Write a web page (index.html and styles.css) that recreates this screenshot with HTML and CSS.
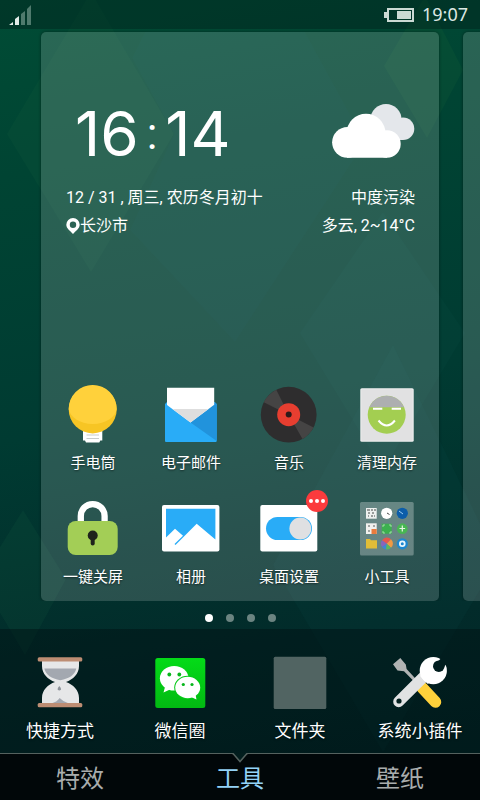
FILE: index.html
```html
<!DOCTYPE html>
<html lang="zh-CN">
<head>
<meta charset="utf-8">
<meta name="viewport" content="width=device-width, initial-scale=1">
<title>桌面</title>
<link rel="stylesheet" href="styles.css">
</head>
<body>
<svg class="wallpaper" viewBox="0 0 480 800" preserveAspectRatio="none" aria-hidden="true">
  <path d="M91-8L174 134 91 272 7 134z" fill="#3c9a52" opacity=".06"/>
  <path d="M145 32h160l60 110-130 200L130 230l44-96-42-76z" fill="#2a7fa0" opacity=".03"/>
  <path d="M425-4L463 70 427 138 384 66z" fill="#3c9a42" opacity=".08"/>
  <path d="M383 212L465 333 383 470 300 333z" fill="#4aa0a0" opacity=".03"/>
  <path d="M393 345L498 560 383 752 273 565z" fill="#2c8d8d" opacity=".04"/>
  <path d="M23 510L66 579 25 655-20 579z" fill="#3c9a62" opacity=".07"/>
</svg>

<header class="status">
  <svg class="signal" viewBox="0 0 24 22" aria-label="信号">
    <path d="M0 21l4-3v3z" fill="#e2ebe8"/><path d="M6 21v-6l4-3v9z" fill="#e2ebe8"/>
    <path d="M12 21V10l4-3v14zM18 21V5l4-4v20z" fill="#4f7a6d"/>
  </svg>
  <div class="status-right">
    <svg class="battery" viewBox="0 0 30 14" aria-label="电量">
      <path d="M4 1h25v12H4z" fill="none" stroke="#cbdad4" stroke-width="2"/>
      <path d="M0 4h3v6H0zM13 3h14v8H13z" fill="#cbdad4"/>
    </svg>
    <time>19:07</time>
  </div>
</header>

<main class="pages">
  <section class="page">
    <div class="widget">
      <div class="clock">16<span class="colon">:</span>14</div>
      <svg class="cloud" viewBox="0 0 84 56" aria-label="多云">
        <g fill="#e4e7eb"><circle cx="55" cy="16.5" r="15.5"/><circle cx="72" cy="25.7" r="11.3"/><path d="M46 20h26v17H46z"/></g>
        <g fill="#fff"><circle cx="16.5" cy="39.3" r="15.4"/><circle cx="35" cy="30.4" r="19.6"/><circle cx="56" cy="41" r="13.7"/><path d="M16 32h40v22.7H16z"/></g>
      </svg>
      <div>12 / 31 , 周三, 农历冬月初十</div>
      <div class="end">中度污染</div>
      <div class="city">
        <svg class="pin" viewBox="0 0 14 16" aria-hidden="true"><path d="M7 0a6.700 6.700 0 0 1 6.700 6.700C13.700 10.500 9.500 13 7 16 4.500 13 .3 10.500.3 6.700A6.700 6.700 0 0 1 7 0zm0 3.600a3.200 3.200 0 1 0 0 6.400 3.200 3.200 0 0 0 0-6.400z" fill="#fff" fill-rule="evenodd"/></svg>长沙市
      </div>
      <div class="end">多云, 2~14°C</div>
    </div>

    <div class="apps">
      <button class="app" type="button">
        <svg class="icon" viewBox="0 0 60 60" aria-hidden="true">
          <path d="M20 45h19.300v11.500h-2l-1 2H23l-1-2h-2z" fill="#fff"/>
          <path d="M23.500 51h12.500M23.500 54.500h12.500" stroke="#c9cccb"/>
          <circle cx="29.700" cy="25.400" r="24" fill="#f7c524"/>
          <path d="M5.700 25a24 24 0 0 1 48 0c-1 8-11 15-24 15S7 33 5.700 25z" fill="#ffd13b"/>
        </svg>
        <span>手电筒</span>
      </button>
      <button class="app" type="button">
        <svg class="icon" viewBox="0 0 60 60" aria-hidden="true">
          <path d="M4 20l2-2h47.500l2.200 2v37a1 1 0 0 1-1 1H5a1 1 0 0 1-1-1z" fill="#29acf7"/>
          <path d="M29.500 38.500L53.500 18l2.200 2v37z" fill="#2193dc"/>
          <path d="M6 3.700h47.200v17L29.500 38.500 6 21z" fill="#fff"/>
          <path d="M11.500 25h36l-18 13.500z" fill="#dedede"/>
        </svg>
        <span>电子邮件</span>
      </button>
      <button class="app" type="button">
        <svg class="icon" viewBox="0 0 60 60" aria-hidden="true">
          <circle cx="29.700" cy="30.700" r="27.900" fill="#2e2d2e"/>
          <path d="M29.700 30.700L4.800 18.200Q8.500 10.500 17.300 5.700zM29.700 30.700L54.600 43.500Q50.500 51 43.500 55z" fill="#454444"/>
          <circle cx="29.700" cy="30.700" r="11.500" fill="#e73e30"/><circle cx="29.700" cy="30.500" r="3" fill="#2e1a1a"/>
        </svg>
        <span>音乐</span>
      </button>
      <button class="app" type="button">
        <svg class="icon" viewBox="0 0 60 60" aria-hidden="true">
          <rect x="3.300" y="4.300" width="53.400" height="53.400" rx="1.500" fill="#f1f1f1"/>
          <rect x="4.300" y="5.300" width="51.400" height="51.400" rx="1" fill="#e1e1e2"/>
          <circle cx="29.700" cy="30.700" r="19" fill="#a3ce51"/>
          <path d="M12.200 23.300a19 19 0 0 1 35 0z" fill="#adafb0"/>
          <path d="M16 24.700h9.300M34.700 24.700H44" stroke="#fff" stroke-width="2"/>
          <path d="M21.500 36.500q8.200 10 16.400 0" fill="none" stroke="#fff" stroke-width="2"/>
        </svg>
        <span>清理内存</span>
      </button>
      <button class="app" type="button">
        <svg class="icon" viewBox="0 0 60 60" aria-hidden="true">
          <path d="M17.800 26v-8a11.900 11.900 0 0 1 23.800 0v8" fill="none" stroke="#fff" stroke-width="6.300"/>
          <rect x="4.700" y="23" width="50" height="34" rx="8" fill="#a3ce56"/>
          <circle cx="29.700" cy="37.500" r="5" fill="#1f231c"/><path d="M29.700 38v7.500" stroke="#1f231c" stroke-width="4" stroke-linecap="round"/>
        </svg>
        <span>一键关屏</span>
      </button>
      <button class="app" type="button">
        <svg class="icon" viewBox="0 0 60 60" aria-hidden="true">
          <rect x="1" y="7" width="57.400" height="46.400" rx="2" fill="#fff"/>
          <path d="M5 10.700h49.400v30.800L35.700 25.700 14.500 47l-1-1 8.500-8.300-8-7L5 39.500z" fill="#29acf7"/>
        </svg>
        <span>相册</span>
      </button>
      <button class="app" type="button">
        <svg class="icon" viewBox="0 0 60 60" aria-hidden="true">
          <rect x="1.300" y="7" width="57" height="46.400" rx="2" fill="#fff"/>
          <rect x="7" y="19" width="46" height="23" rx="11.500" fill="#29acf7"/>
          <circle cx="41.300" cy="30.500" r="10.900" fill="#dfe0e2"/>
        </svg>
        <span class="badge"><i></i><i></i><i></i></span>
        <span>桌面设置</span>
      </button>
      <button class="app" type="button">
        <svg class="icon" viewBox="0 0 60 60" aria-hidden="true">
          <rect x="3" y="4" width="53.700" height="53.400" rx="1.500" fill="#fff" fill-opacity=".29"/>
          <rect x="9" y="10" width="10.700" height="10.700" fill="#eef1ef"/>
          <path d="M10 12h3m1 0h2m1 0h2M11 15h2m2 0h2M11 18h1m2 0h2m1 0h1" stroke="#454b49" stroke-width="1.200"/>
          <circle cx="29.700" cy="15.300" r="5.600" fill="#fff"/><path d="M30 15l2.500 1.500" stroke="#444"/>
          <circle cx="45.300" cy="15.300" r="5.600" fill="#0c5da9"/><path d="M42 13l4 3" stroke="#9dd1f5"/>
          <rect x="9" y="25.300" width="10.700" height="10.700" fill="#f2f1ee"/><path d="M11 28h2m3 0h2M11 33h2" stroke="#565c5a" stroke-width="1.200"/><path d="M14.500 31h5.200v5h-5.200z" fill="#ea7b3d"/>
          <rect x="24.700" y="25.700" width="10" height="10" fill="#3cb04f"/><path d="M26 29v-2h2m4 0h2v2m0 4v2h-2m-4 0h-2v-2" fill="none" stroke="#c7efc9" stroke-width=".7"/>
          <circle cx="45.300" cy="30.700" r="5.400" fill="#48b653"/><path d="M45.300 27.500v6M42.500 30.500h5.600" stroke="#e6f7e3" stroke-width="1.200"/>
          <path d="M9 41h4l1 1.300h6V50.500H9z" fill="#e1bd38"/>
          <circle cx="29.700" cy="45.800" r="5.600" fill="#3f86d3"/><path d="M29.700 45.800L25 42.500a5.600 5.600 0 0 1 9-1.200z" fill="#e6574d"/><path d="M29.700 45.800l4.300-4.500a5.600 5.600 0 0 1 0 8.500z" fill="#f19a42"/><path d="M29.700 45.800L25 42.500a5.600 5.600 0 0 0 0 6.300z" fill="#8b64b8"/><path d="M29.700 45.800l4.300 4a5.600 5.600 0 0 1-5 1.500z" fill="#5cb85a"/>
          <circle cx="45.300" cy="45.800" r="5.600" fill="#1d87cf"/><circle cx="45.300" cy="45.800" r="2.400" fill="none" stroke="#e9f6fd" stroke-width="1.800"/>
        </svg>
        <span>小工具</span>
      </button>
    </div>
  </section>
  <section class="page" aria-hidden="true"></section>
</main>

<div class="pager" aria-hidden="true"><i class="current"></i><i></i><i></i><i></i></div>

<section class="dock">
  <button class="app" type="button">
    <svg class="icon" viewBox="0 0 60 60" aria-hidden="true">
      <path d="M12 8h37v5c0 8-6 13.500-13 16 7 2.500 13 8 13 16v6H12v-6c0-8 6-13.500 13-16-7-2.500-13-8-13-16z" fill="#e6e7e8"/>
      <path d="M14.300 15.500h32c-1.500 6.500-7 10-16 11.700-9-1.700-14.500-5.200-16-11.700z" fill="#a3a8b0"/>
      <path d="M21 50.500q6-1.500 8.700-5.500 3.500 4 9.300 5.500z" fill="#a3a8b0"/>
      <path d="M29.300 33q3.500 4 0 4.500-3.500-.5 0-4.500z" fill="#8d9299"/>
      <rect x="7.700" y="4.300" width="44.600" height="4.200" rx="1.500" fill="#bd8d73"/><rect x="7.700" y="50" width="44.600" height="4.200" rx="1.500" fill="#bd8d73"/>
    </svg>
    <span>快捷方式</span>
  </button>
  <button class="app" type="button">
    <svg class="icon" viewBox="0 0 60 60" aria-hidden="true">
      <defs><linearGradient id="green" x2="0" y2="1"><stop stop-color="#04db18"/><stop offset="1" stop-color="#02b912"/></linearGradient></defs>
      <rect x="5.300" y="5" width="50" height="50" rx="2.500" fill="url(#green)"/>
      <path d="M15 34l-1.500 5.500 6.500-3z" fill="#fff"/><ellipse cx="24.200" cy="25.200" rx="14.300" ry="12.300" fill="#fff"/>
      <circle cx="19.300" cy="21.500" r="1.900" fill="#07b61b"/><circle cx="29.300" cy="21.500" r="1.900" fill="#07b61b"/>
      <ellipse cx="37.700" cy="34.500" rx="13.500" ry="11.800" fill="#04c916"/>
      <ellipse cx="37.700" cy="34.500" rx="12.500" ry="10.700" fill="#fff"/><path d="M41 44l5.500 2.500-1-5z" fill="#fff"/>
      <circle cx="33.300" cy="31.500" r="1.600" fill="#07b61b"/><circle cx="42" cy="31.500" r="1.600" fill="#07b61b"/>
    </svg>
    <span>微信圈</span>
  </button>
  <button class="app" type="button">
    <svg class="icon" viewBox="0 0 60 60" aria-hidden="true"><rect x="3.700" y="3.700" width="52.600" height="52.400" rx="1.500" fill="#516462"/></svg>
    <span>文件夹</span>
  </button>
  <button class="app" type="button">
    <svg class="icon" viewBox="0 0 60 60" aria-hidden="true">
      <defs><mask id="jaw"><path d="M0 0h60v60H0z" fill="#fff"/><circle cx="48.800" cy="13.200" r="5.800" fill="#000"/><path d="M49.500 12.500L62 0" stroke="#000" stroke-width="8"/></mask></defs>
      <path d="M3 11.200L10.300 5l5.500 6.500.8 4.500 9.700 10.500-2 2.200L14 18.200l-6.500-.8z" fill="#b1b3b3"/>
      <path d="M32 34.500L45.500 49" stroke="#ffd13b" stroke-width="11.500" stroke-linecap="round"/>
      <path d="M8.700 48.700L35 22.500" stroke="#e1e2e3" stroke-width="11" stroke-linecap="round"/>
      <g mask="url(#jaw)"><circle cx="43.300" cy="17.700" r="13.600" fill="#fff"/><path d="M41 20l-7 7" stroke="#fff" stroke-width="11"/></g>
      <circle cx="9" cy="48" r="2.600" fill="#04201f"/>
    </svg>
    <span>系统小插件</span>
  </button>
</section>

<nav class="tabs">
  <svg class="notch" viewBox="0 0 16 10" aria-hidden="true"><path d="M0 0h16L8 9z" fill="#021d1d"/><path d="M0 .5h1L8 8.500 15 .5h1" fill="none" stroke="#55625f" stroke-width="1.500"/></svg>
  <a href="#effects">特效</a>
  <a href="#tools" class="active" aria-current="page">工具</a>
  <a href="#wallpaper">壁纸</a>
</nav>
</body>
</html>
```
FILE: styles.css
```css
* {
  box-sizing: border-box;
}

body {
  position: relative;
  display: flex;
  flex-direction: column;
  min-height: 100vh;
  margin: 0;
  overflow-x: hidden;
  color: #fff;
  font-family: Roboto, "Noto Sans CJK SC", sans-serif;
  background: linear-gradient(170deg, #004c35 0%, #004433 20%, #003b32 50%, #022b2a 78%, #012324 100%);
}

.wallpaper {
  position: absolute;
  inset: 0;
  z-index: -1;
  width: 100%;
  height: 100%;
}

.status {
  display: flex;
  align-items: center;
  justify-content: space-between;
  height: 29px;
  padding: 0 12px 0 9px;
  background: rgba(0, 20, 20, 0.35);
}

.signal {
  width: 24px;
  height: 22px;
}

.status-right {
  display: flex;
  align-items: center;
  gap: 8px;
  color: #dce8e3;
  font: 18px/28px "Noto Sans", sans-serif;
}

.status time {
  padding-bottom: 2px;
}

.battery {
  width: 30px;
  height: 14px;
}

.pages {
  display: flex;
  flex: 1;
  gap: 24px;
  padding: 3px 0 0 41px;
  overflow: hidden;
}

.page {
  display: flex;
  flex: 0 0 calc(100% - 41px);
  flex-direction: column;
  justify-content: space-between;
  padding: 71px 0 14px;
  border-radius: 5px;
  background: rgba(255, 255, 255, 0.16);
  box-shadow: 0 0 3px rgba(0, 20, 16, 0.6);
}

.widget {
  display: grid;
  grid-template-columns: 1fr auto;
  padding: 0 24px 0 25px;
  font-size: 16px;
  line-height: 28px;
}

.clock {
  padding-left: 9px;
  margin-bottom: 20px;
  font: 400 62px/61px Inter, sans-serif;
}

.colon {
  padding: 0 8px;
  font: 400 44px/44px Roboto, sans-serif;
  vertical-align: 7px;
}

.cloud {
  justify-self: end;
  width: 84px;
  height: 56px;
}

.end {
  text-align: right;
}

.city {
  display: flex;
  align-items: center;
}

.pin {
  width: 14px;
  height: 16px;
}

.apps {
  display: grid;
  grid-template-columns: repeat(4, 1fr);
  row-gap: 25px;
  padding: 0 3px;
}

.app {
  position: relative;
  display: flex;
  flex-direction: column;
  align-items: center;
  gap: 9px;
  padding: 0;
  border: 0;
  color: inherit;
  background: none;
  font: inherit;
  font-size: 15px;
  line-height: 20px;
  text-shadow: 0 1px 2px rgba(0, 0, 0, 0.5);
  white-space: nowrap;
}

.icon {
  width: 60px;
  height: 60px;
}

.badge {
  position: absolute;
  top: -8px;
  left: calc(50% + 17px);
  display: flex;
  align-items: center;
  justify-content: center;
  gap: 2px;
  width: 22px;
  height: 22px;
  border-radius: 50%;
  background: #fb3b3d;
}

.badge i {
  width: 4px;
  height: 4px;
  border-radius: 50%;
  background: #fff;
}

.pager {
  display: flex;
  justify-content: center;
  gap: 13px;
  padding: 13px 0 7px;
}

.pager i {
  width: 8px;
  height: 8px;
  border-radius: 50%;
  background: #6b8481;
}

.pager .current {
  background: #fff;
}

.dock {
  display: grid;
  grid-template-columns: repeat(4, 1fr);
  padding: 24px 0 10px;
  background: rgba(0, 16, 18, 0.45);
}

.dock .app {
  gap: 6px;
  font-size: 17px;
  line-height: 24px;
}

.tabs {
  position: relative;
  display: grid;
  grid-template-columns: repeat(3, 1fr);
  padding-top: 4px;
  border-top: 1px solid #55625f;
  background: #010709;
}

.notch {
  position: absolute;
  top: -1px;
  left: calc(50% - 8px);
  width: 16px;
  height: 10px;
}

.tabs a {
  color: #a9adad;
  font-size: 24px;
  line-height: 42px;
  text-align: center;
  text-decoration: none;
}

.tabs .active {
  color: #93d2f7;
}
```
